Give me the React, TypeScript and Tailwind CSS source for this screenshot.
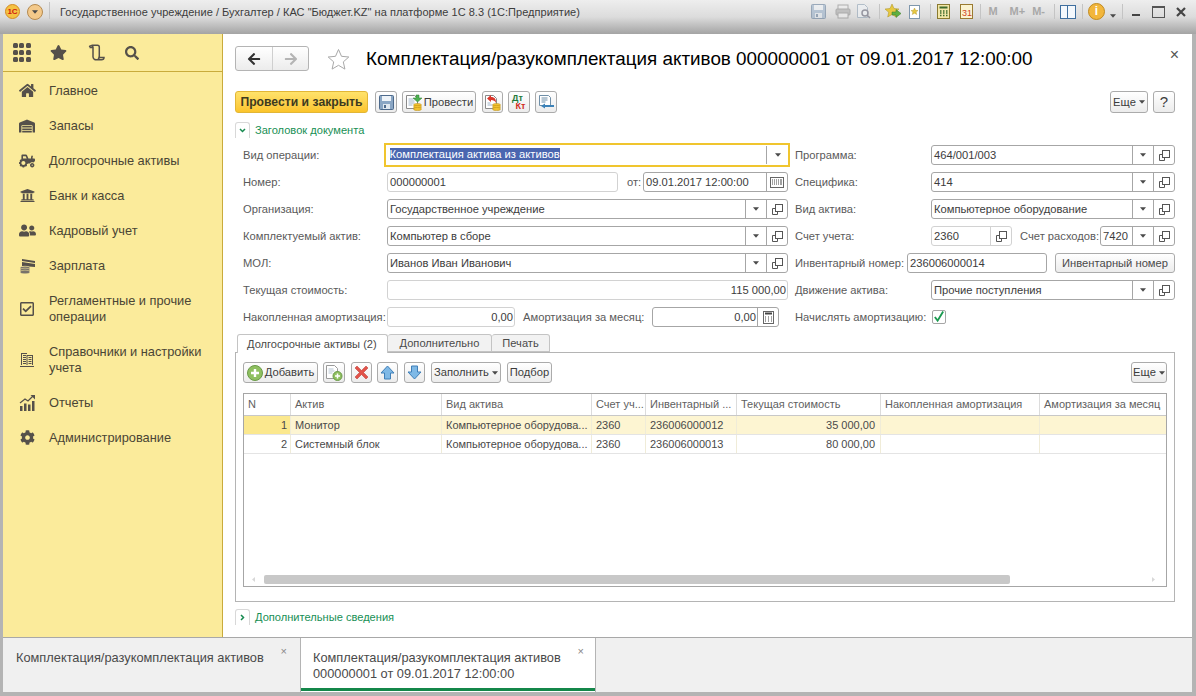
import React from "react";
import { FaHome, FaWarehouse, FaTractor, FaUniversity, FaUserFriends, FaRegCheckSquare, FaCog, FaStar, FaSearch, FaArrowLeft, FaArrowRight } from "react-icons/fa";

const font = "font-['Liberation_Sans',Arial,sans-serif]";

function Caret({ className = "" }: { className?: string }) {
  return (
    <svg width="6" height="4" viewBox="0 0 7 4" className={className}>
      <path d="M0 0h7L3.5 4z" fill="#4a4a4a" />
    </svg>
  );
}

function OpenIcon() {
  return (
    <svg width="11" height="11" viewBox="0 0 11 11" fill="none" stroke="#555">
      <rect x="3.5" y="0.5" width="7" height="7" />
      <path d="M3.5 4.5h-3v6h5v-3" />
    </svg>
  );
}

function CalendarGrid() {
  return (
    <svg width="14" height="11" viewBox="0 0 14 11" fill="none">
      <rect x="0.5" y="0.5" width="13" height="10" stroke="#666" />
      <path d="M2 3h1M4 3h1M6 3h1M8 3h1M10 3h2M2 5h1M4 5h1M6 5h1M8 5h1M10 5h2M2 7h1M4 7h1M6 7h1M8 7h1M10 7h2" stroke="#444" />
    </svg>
  );
}

function CalcIcon() {
  return (
    <svg width="11" height="13" viewBox="0 0 11 13" fill="none">
      <rect x="0.5" y="0.5" width="10" height="12" stroke="#666" />
      <path d="M2 2.5h7" stroke="#444" strokeWidth="2" />
      <path d="M2 6h1M5 6h1M8 6h1M2 8h1M5 8h1M8 8h1M2 10h1M5 10h1M8 10h1" stroke="#444" />
    </svg>
  );
}

type FieldProps = {
  value: string;
  className?: string;
  drop?: boolean;
  open?: boolean;
  readOnly?: boolean;
  right?: boolean;
  trailing?: React.ReactNode;
};

function Field({ value, className = "flex-1", drop, open, readOnly, right, trailing }: FieldProps) {
  const border = readOnly ? "border-[#d2d2d2]" : "border-[#a6a6a6]";
  return (
    <div className={`h-5 flex items-stretch border rounded-[3px] bg-white ${border} ${className}`}>
      <div className={`flex-1 min-w-0 pl-[2px] pr-[1px] leading-[18px] text-[#3c3c3c] whitespace-nowrap overflow-hidden ${right ? "text-right" : ""}`}>{value}</div>
      {drop && (
        <div className={`w-[21px] flex items-center justify-center border-l ${border}`}>
          <Caret />
        </div>
      )}
      {open && (
        <div className={`w-[21px] flex items-center justify-center border-l ${border}`}>
          <OpenIcon />
        </div>
      )}
      {trailing && <div className={`w-[21px] flex items-center justify-center border-l ${border}`}>{trailing}</div>}
    </div>
  );
}

function Btn({ children, className = "" }: { children: React.ReactNode; className?: string }) {
  return (
    <div className={`flex items-center justify-center border border-[#ababab] rounded-[3px] bg-linear-to-b from-white to-[#ececec] text-[#3c3c3c] whitespace-nowrap ${className}`}>
      {children}
    </div>
  );
}

function Floppy({ faded }: { faded?: boolean }) {
  return (
    <svg width="15" height="15" viewBox="0 0 15 15" opacity={faded ? 0.5 : 1}>
      <rect x="0.5" y="0.5" width="14" height="14" rx="1" fill="#8aa6c4" stroke="#4d6a8c" />
      <rect x="3" y="1" width="9" height="5" fill="#eef3f8" />
      <rect x="4" y="9" width="7" height="5" fill="#dfe7ef" />
      <rect x="5" y="10" width="2" height="3" fill="#4d6a8c" />
    </svg>
  );
}

function DocCoins() {
  return (
    <svg width="18" height="17" viewBox="0 0 18 17">
      <path d="M1.5 1.5h8l3 3v10h-11z" fill="#fff" stroke="#8a8a8a" />
      <path d="M3.5 5h5M3.5 7h6M3.5 9h6M3.5 11h4" stroke="#9fb4c8" />
      <path d="M11 1h3v3h3l-4.500 4L8 4h3z" fill="#4caf50" stroke="#2e7d32" strokeWidth="0.5" />
      <ellipse cx="12.5" cy="11" rx="4" ry="1.6" fill="#f2c230" stroke="#b88a10" strokeWidth="0.5" />
      <ellipse cx="12.5" cy="13" rx="4" ry="1.6" fill="#f2c230" stroke="#b88a10" strokeWidth="0.5" />
      <ellipse cx="12.5" cy="15" rx="4" ry="1.6" fill="#f2c230" stroke="#b88a10" strokeWidth="0.5" />
    </svg>
  );
}

function DocUndo() {
  return (
    <svg width="18" height="17" viewBox="0 0 18 17">
      <path d="M1.5 1.5h8l3 3v10h-11z" fill="#fff" stroke="#8a8a8a" />
      <path d="M3.5 11h5M3.5 9h3" stroke="#9fb4c8" />
      <path d="M7 1L3 4.500 7 8V6c2.500 0 4 .8 5 3 .2-4-1.500-6-5-6z" fill="#d9362b" />
      <ellipse cx="12.5" cy="11" rx="4" ry="1.6" fill="#f2c230" stroke="#b88a10" strokeWidth="0.5" />
      <ellipse cx="12.5" cy="13" rx="4" ry="1.6" fill="#f2c230" stroke="#b88a10" strokeWidth="0.5" />
      <ellipse cx="12.5" cy="15" rx="4" ry="1.6" fill="#f2c230" stroke="#b88a10" strokeWidth="0.5" />
    </svg>
  );
}

function DocArrow() {
  return (
    <svg width="18" height="17" viewBox="0 0 18 17">
      <path d="M2.500 1.500h9l2 2v8h-11v-10z" fill="#fff" stroke="#6f8fa8" />
      <path d="M4.500 4h6M4.500 6h6M4.500 8h4" stroke="#6f8fa8" />
      <path d="M8 9.500l-4 2.500 4 2.500V13h9v-2H8z" fill="#3c82b8" />
    </svg>
  );
}

function AddCircle() {
  return (
    <svg width="16" height="16" viewBox="0 0 16 16">
      <circle cx="8" cy="8" r="7.500" fill="#8fc060" stroke="#6a9a48" />
      <path d="M8 4v8M4 8h8" stroke="#fff" strokeWidth="2.400" />
    </svg>
  );
}

function DocAdd() {
  return (
    <svg width="18" height="17" viewBox="0 0 18 17">
      <path d="M1.500 1.500h8l3 3v10h-11z" fill="#fff" stroke="#9a9a9a" />
      <path d="M3.500 5h5M3.500 7h6M3.500 9h4" stroke="#b5c4d2" />
      <circle cx="12.500" cy="12" r="4.500" fill="#8fc060" stroke="#6a9a48" />
      <path d="M12.500 9.500v5M10 12h5" stroke="#fff" strokeWidth="1.500" />
    </svg>
  );
}

function RedCross() {
  return (
    <svg width="15" height="15" viewBox="0 0 15 15">
      <path d="M1 3l2-2 4.500 4.500L12 1l2 2-4.500 4.500L14 12l-2 2-4.500-4.500L3 14l-2-2 4.500-4.500z" fill="#e2534a" stroke="#b9342c" strokeWidth="0.500" />
    </svg>
  );
}

function ArrowUpBlue({ down }: { down?: boolean }) {
  return (
    <svg width="15" height="15" viewBox="0 0 15 15" className={down ? "rotate-180" : ""}>
      <path d="M7.500 1L14 8h-3.500v6h-6V8H1z" fill="#7fb9e6" stroke="#3f7fb8" />
    </svg>
  );
}

function ChartIcon() {
  return (
    <svg width="17" height="16" viewBox="0 0 17 16" fill="#55504a">
      <rect x="1" y="11" width="2.500" height="5" />
      <rect x="5" y="8.500" width="2.500" height="7.500" />
      <rect x="9" y="9.500" width="2.500" height="6.500" />
      <rect x="13" y="6" width="2.500" height="10" />
      <path d="M1 8l5-4 3 2 5-5" fill="none" stroke="#55504a" strokeWidth="1.200" />
      <path d="M11.500 0H16v4.500z" />
    </svg>
  );
}

function BooksIcon() {
  return (
    <svg width="14" height="15" viewBox="0 0 14 15" fill="none" stroke="#55504a">
      <path d="M1.500 1v12M7 3v10M12.500 3v10" />
      <path d="M1 1.500h6M3 3.500h3M3 5.500h3M3 7.500h3M3 9.500h3M3 11.500h3M8.500 5.500h3M8.500 7.500h3M8.500 9.500h3M8.500 11.500h3M7 3.500h6" />
      <path d="M0 14.500h14" />
    </svg>
  );
}

function SalaryIcon() {
  return (
    <svg width="17" height="16" viewBox="0 0 17 16">
      <path d="M3 1l13 2v6L3 8z" fill="#55504a" />
      <path d="M3 3.500l13 2" stroke="#fbeb9b" />
      <ellipse cx="6" cy="10" rx="5" ry="1.800" fill="#77726a" stroke="#fbeb9b" strokeWidth="0.500" />
      <ellipse cx="6" cy="12" rx="5" ry="1.800" fill="#77726a" stroke="#fbeb9b" strokeWidth="0.500" />
      <ellipse cx="6" cy="14" rx="5" ry="1.800" fill="#77726a" stroke="#fbeb9b" strokeWidth="0.500" />
    </svg>
  );
}

function ScrollIcon() {
  return (
    <svg width="17" height="17" viewBox="0 0 17 17" fill="none" stroke="#55504a" strokeWidth="1.500">
      <path d="M1.500 3c0-1.500 3-2 3.500 0v10c.2 1.800 2 2.800 3 2.800h5.500c1.500 0 2.500-1 2.500-2.300h-5c0 1.400-1 2.300-2.500 2.300" />
      <path d="M1.500 3.500H5M3.500 1.200h6c1.200 0 1.800 1 1.800 2v10" />
    </svg>
  );
}

const navItems: { label: React.ReactNode; icon: React.ReactNode; tall?: boolean }[] = [
  { label: "Главное", icon: <FaHome size={17} /> },
  { label: "Запасы", icon: <FaWarehouse size={16} /> },
  { label: "Долгосрочные активы", icon: <FaTractor size={16} /> },
  { label: "Банк и касса", icon: <FaUniversity size={15} /> },
  { label: "Кадровый учет", icon: <FaUserFriends size={17} /> },
  { label: "Зарплата", icon: <SalaryIcon /> },
  { label: <>Регламентные и прочие<br />операции</>, icon: <FaRegCheckSquare size={16} />, tall: true },
  { label: <>Справочники и настройки<br />учета</>, icon: <BooksIcon />, tall: true },
  { label: "Отчеты", icon: <ChartIcon /> },
  { label: "Администрирование", icon: <FaCog size={15} /> },
];

function Sidebar() {
  return (
    <aside className="w-[220px] shrink-0 bg-[#fbeb9b] border-r border-[#c9ab3c] text-[#4a4535]">
      <div className="h-[38px] flex items-center pl-[10px] border-b border-[#c9ab3c] text-[#55504a]">
        <div className="grid grid-cols-3 gap-[2px] w-[17px]">
          {Array.from({ length: 9 }).map((_, i) => (
            <span key={i} className="w-[5px] h-[5px] rounded-[1.500px] bg-[#55504a]" />
          ))}
        </div>
        <FaStar size={17} className="ml-[20px]" />
        <span className="ml-[21px]"><ScrollIcon /></span>
        <FaSearch size={14} className="ml-[20px]" />
      </div>
      <nav className="pt-[1px] text-[12.800px] leading-[16px]">
        {navItems.map((item, i) => (
          <div key={i} className={`flex items-center pl-[15px] ${item.tall ? "h-[51px]" : "h-[35px]"}`}>
            <div className="w-[18px] flex justify-center text-[#55504a]">{item.icon}</div>
            <div className="ml-[13px] whitespace-nowrap">{item.label}</div>
          </div>
        ))}
      </nav>
    </aside>
  );
}

function GroupHeader({ label, open }: { label: string; open?: boolean }) {
  return (
    <div className="h-4 flex items-center">
      <div className="w-[15px] h-4 flex items-center justify-center border-l border-t border-r border-[#d8d8d8] rounded-t-[3px]">
        <svg width="7" height="7" viewBox="0 0 7 7" fill="none" stroke="#178a50" strokeWidth="1.500" className={open ? "" : "-rotate-90"}>
          <path d="M1 2l2.500 2.500L6 2" />
        </svg>
      </div>
      <span className="ml-[5px] mt-[1px] text-[#178f55] text-[11.100px]">{label}</span>
    </div>
  );
}

function Row({ children }: { children: React.ReactNode }) {
  return <div className="h-5 flex items-center text-[#5a5a5a]">{children}</div>;
}

function Label({ w, children, className = "" }: { w: string; children: React.ReactNode; className?: string }) {
  return <span className={`${w} mt-[1px] whitespace-nowrap ${className}`}>{children}</span>;
}

function LeftForm() {
  return (
    <div className="w-[553px] pl-2 flex flex-col gap-[7px]">
      <Row>
        <Label w="w-[144px]">Вид операции:</Label>
        <div className="flex-1 -ml-[3px] -mr-[2px] h-[24px] border-[2.500px] border-[#f0c52e] flex items-stretch bg-white">
          <div className="flex-1 pl-[3.500px] leading-[19px] text-[#25305c]">
            <span className="bg-[#4a66b0] text-white">Комплектация актива из активов</span>
          </div>
          <div className="w-[22px] my-[1px] flex items-center justify-center border-l border-[#a6a6a6]"><Caret /></div>
        </div>
      </Row>
      <Row>
        <Label w="w-[144px]">Номер:</Label>
        <Field value="000000001" className="w-[231px] !border-[#d2d2d2]" />
        <Label w="w-[16px]" className="ml-[9px]">от:</Label>
        <Field value="09.01.2017 12:00:00" className="flex-1" trailing={<CalendarGrid />} />
      </Row>
      <Row>
        <Label w="w-[144px]">Организация:</Label>
        <Field value="Государственное учреждение" drop open />
      </Row>
      <Row>
        <Label w="w-[144px]">Комплектуемый актив:</Label>
        <Field value="Компьютер в сборе" drop open />
      </Row>
      <Row>
        <Label w="w-[144px]">МОЛ:</Label>
        <Field value="Иванов Иван Иванович" drop open />
      </Row>
      <Row>
        <Label w="w-[144px]">Текущая стоимость:</Label>
        <Field value="115 000,00" readOnly right />
      </Row>
      <Row>
        <Label w="w-[144px]">Накопленная амортизация:</Label>
        <Field value="0,00" readOnly right className="w-[128px]" />
        <Label w="w-[129px]" className="ml-2">Амортизация за месяц:</Label>
        <Field value="0,00" right className="w-[127px]" trailing={<CalcIcon />} />
      </Row>
    </div>
  );
}

function RightForm() {
  return (
    <div className="w-[380px] ml-[7px] flex flex-col gap-[7px]">
      <Row>
        <Label w="w-[136px]">Программа:</Label>
        <Field value="464/001/003" drop open />
      </Row>
      <Row>
        <Label w="w-[136px]">Специфика:</Label>
        <Field value="414" drop open />
      </Row>
      <Row>
        <Label w="w-[136px]">Вид актива:</Label>
        <Field value="Компьютерное оборудование" drop open />
      </Row>
      <Row>
        <Label w="w-[136px]">Счет учета:</Label>
        <Field value="2360" open readOnly className="w-[81px]" />
        <Label w="w-[80px]" className="ml-2">Счет расходов:</Label>
        <Field value="7420" drop open />
      </Row>
      <Row>
        <Label w="w-[112px]">Инвентарный номер:</Label>
        <Field value="236006000014" className="w-[140px]" />
        <Btn className="ml-2 flex-1 h-5 text-[#4a4a4a]">Инвентарный номер</Btn>
      </Row>
      <Row>
        <Label w="w-[136px]">Движение актива:</Label>
        <Field value="Прочие поступления" drop open />
      </Row>
      <Row>
        <Label w="w-[137px]">Начислять амортизацию:</Label>
        <div className="w-[14px] h-[14px] border border-[#a6a6a6] rounded-[2px] flex items-center justify-center bg-white">
          <svg width="13" height="13" viewBox="0 0 13 13" fill="none" stroke="#1a9a50" strokeWidth="2" className="-mt-[2px]">
            <path d="M2 7l3 4 6-10" />
          </svg>
        </div>
      </Row>
    </div>
  );
}

const columns = [
  { title: "N", w: "w-[47px]" },
  { title: "Актив", w: "w-[151px]" },
  { title: "Вид актива", w: "w-[150px]" },
  { title: "Счет уч...", w: "w-[54px]" },
  { title: "Инвентарный ...", w: "w-[91px]" },
  { title: "Текущая стоимость", w: "w-[144px]" },
  { title: "Накопленная амортизация", w: "w-[159px]" },
  { title: "Амортизация за месяц", w: "flex-1 min-w-0" },
];

const rows = [
  ["1", "Монитор", "Компьютерное оборудова...", "2360", "236006000012", "35 000,00", "", ""],
  ["2", "Системный блок", "Компьютерное оборудова...", "2360", "236006000013", "80 000,00", "", ""],
];

function AssetsTable() {
  return (
    <div className="h-[194px] mt-[10px] mx-[7px] border border-[#a6a6a6] flex flex-col text-[#4a4a4a] text-[11px]">
      <div className="h-[22px] flex border-b border-[#c8c8c8] text-[#5f5f5f]">
        {columns.map((c) => (
          <div key={c.title} className={`${c.w} pl-[4px] pr-[2px] leading-[21px] border-r border-[#dcdcdc] last:border-r-0 whitespace-nowrap overflow-hidden`}>
            {c.title}
          </div>
        ))}
      </div>
      {rows.map((r, ri) => (
        <div key={ri} className={`h-[19px] flex border-b border-[#e4e4e4] ${ri === 0 ? "bg-[#fdf5d2]" : ""}`}>
          {r.map((v, ci) => (
            <div
              key={ci}
              className={`${columns[ci].w} pl-[4px] leading-[18px] border-r border-[#f0ecd8] last:border-r-0 whitespace-nowrap overflow-hidden ${ci === 0 ? "text-right pr-[3px]" : ci === 5 ? "text-right pr-[5px]" : "pr-0"} ${ri === 0 && ci === 0 ? "bg-[#fbe88e]" : ""}`}
            >
              {v}
            </div>
          ))}
        </div>
      ))}
      <div className="flex-1" />
      <div className="h-[9px] mb-[2px] flex items-center pl-[8px] pr-[11px]">
        <svg width="3" height="5" viewBox="0 0 3 5"><path d="M3 0v5L0 2.500z" fill="#d8d8d8" /></svg>
        <div className="ml-[9px] w-[746px] h-[9px] rounded-[2px] bg-[#c8c8c8]" />
        <svg width="3" height="5" viewBox="0 0 3 5" className="ml-auto"><path d="M0 0v5l3-2.500z" fill="#d8d8d8" /></svg>
      </div>
    </div>
  );
}

function AssetsPanel() {
  return (
    <>
      <div className="mt-[7px] h-[18px] flex items-stretch text-[#4a4a4a] text-[11.100px]">
        <div className="ml-[2px] w-[151px] border border-b-0 border-[#c4c4c4] rounded-t-[3px] bg-white relative z-10 h-[19px] pl-[9px] leading-[18px]">Долгосрочные активы (2)</div>
        <div className="w-[104px] border border-l-0 border-[#c4c4c4] rounded-t-[3px] bg-[#f2f2f2] text-center leading-[17px]">Дополнительно</div>
        <div className="w-[58px] border border-l-0 border-[#c4c4c4] rounded-t-[3px] bg-[#f2f2f2] text-center leading-[17px]">Печать</div>
      </div>
      <div className="h-[250px] border border-[#b4b4b4] pt-[9px]">
        <div className="flex items-stretch h-[21px] px-[7px]">
          <Btn className="w-[75px] gap-[2px]"><AddCircle />Добавить</Btn>
          <Btn className="ml-[5px] w-[22px]"><DocAdd /></Btn>
          <Btn className="ml-[6px] w-[21px]"><RedCross /></Btn>
          <Btn className="ml-[5px] w-[21px]"><ArrowUpBlue /></Btn>
          <Btn className="ml-[6px] w-[21px]"><ArrowUpBlue down /></Btn>
          <Btn className="ml-[6px] w-[70px] gap-[3px]">Заполнить<Caret /></Btn>
          <Btn className="ml-[6px] w-[45px]">Подбор</Btn>
          <Btn className="ml-auto w-[36px] gap-[3px]">Еще<Caret /></Btn>
        </div>
        <AssetsTable />
      </div>
    </>
  );
}

function TitleBar() {
  return (
    <header className="h-[34px] shrink-0 flex items-start bg-linear-to-b from-[#eeeeee] via-[#dcdcdc] to-[#a4a4a4] text-[#3c3c3c]">
      <div className="ml-[5px] mt-[4px] w-[15px] h-[15px] rounded-full bg-[#f5c242] border border-[#d58a20] flex items-center justify-center text-[8px] font-bold text-[#d02010] leading-none">1С</div>
      <div className="ml-[7px] mt-[4px] w-[16px] h-[16px] rounded-full bg-[#f3c98a] border border-[#b58a50] flex items-center justify-center"><Caret /></div>
      <div className="ml-[6px] mt-[2px] w-px h-[17px] bg-[#c4c4c4]" />
      <div className="ml-[10px] mt-[4px] text-[11px] leading-[16px] tracking-[0.030px] whitespace-nowrap">Государственное учреждение / Бухгалтер / КАС "Бюджет.KZ" на платформе 1С 8.3  (1С:Предприятие)</div>
      <div className="ml-auto mt-[4px] mr-[10px] flex items-center h-[15px] text-[#a8a8a8] font-bold text-[11px]">
        <Floppy faded />
        <svg width="16" height="15" viewBox="0 0 16 15" className="ml-[9px]" opacity="0.6"><rect x="3" y="1" width="10" height="5" fill="#eee" stroke="#888" /><rect x="1" y="5" width="14" height="6" rx="1" fill="#aaa" stroke="#888" /><rect x="3" y="9" width="10" height="5" fill="#eee" stroke="#888" /></svg>
        <svg width="15" height="15" viewBox="0 0 15 15" className="ml-[5px]" opacity="0.6"><path d="M1.500.5h7l3 3v10h-10z" fill="#eef2f6" stroke="#8fa2b5" /><circle cx="9" cy="9" r="3" fill="none" stroke="#667" strokeWidth="1.500" /><path d="M11 11l3 3" stroke="#667" strokeWidth="1.500" /></svg>
        <div className="ml-[8px] w-px h-[15px] bg-[#c4c4c4]" />
        <svg width="16" height="15" viewBox="0 0 16 15" className="ml-[5px]"><path d="M7 0l2 4.500 5 .5-3.700 3.300 1 4.700L7 10.500 2.700 13l1-4.700L0 5l5-.5z" fill="#e8c840" stroke="#a89020" strokeWidth="0.500" /><path d="M7 8h4V5.500l5 4-5 4V11H7z" fill="#5fb040" stroke="#3a7a28" strokeWidth="0.500" /></svg>
        <svg width="11" height="14" viewBox="0 0 11 14" className="ml-[8px]"><rect x="0.500" y="0.500" width="10" height="13" fill="#fff" stroke="#7f97ad" /><path d="M5.500 3l1 2.300 2.500.2-1.900 1.600.6 2.400-2.200-1.300-2.200 1.300.6-2.400L2 5.500l2.500-.2z" fill="#e8c840" stroke="#a89020" strokeWidth="0.400" /></svg>
        <div className="ml-[10px] w-px h-[15px] bg-[#c4c4c4]" />
        <svg width="13" height="15" viewBox="0 0 13 15" className="ml-[6px]"><rect x="0.500" y="0.500" width="12" height="14" fill="#f3e7a8" stroke="#8a7a30" /><rect x="2.500" y="2.500" width="8" height="2" fill="#3d6b2c" /><path d="M3 7h1.500M6 7h1.500M9 7h1.500M3 9h1.500M6 9h1.500M9 9h1.500M3 11.500h1.500M6 11.500h1.500M9 11.500h1.500" stroke="#3d6b2c" strokeWidth="1.300" /></svg>
        <div className="ml-[10px] w-[13px] h-[15px] border border-[#9a7a30] bg-[#fbf3d0] text-[#d04020] text-[9px] leading-[16px] text-center font-normal">31</div>
        <div className="ml-[7px] w-px h-[15px] bg-[#c4c4c4]" />
        <span className="ml-[7px]">M</span>
        <span className="ml-[12px]">M+</span>
        <span className="ml-[7px]">M-</span>
        <div className="ml-[9px] w-px h-[15px] bg-[#c4c4c4]" />
        <div className="ml-[5px] w-[16px] h-[14px] border border-[#3f6f9f] bg-[#f4f8fc] flex"><div className="w-[7px] border-r border-[#3f6f9f]" /></div>
        <div className="ml-[6px] w-px h-[15px] bg-[#c4c4c4]" />
        <div className="ml-[5px] w-[17px] h-[17px] rounded-full bg-[#f2b63c] border border-[#c08a20] text-white text-[12px] leading-[15px] text-center">i</div>
        <Caret className="ml-[5px] mt-[8px]" />
        <div className="ml-[6px] w-px h-[15px] bg-[#c4c4c4]" />
        <div className="ml-[9px] mt-[6px] w-[8px] h-[2px] bg-[#444]" />
        <div className="ml-[12px] w-[13px] h-[12px] border border-[#555] border-t-2" />
        <svg width="10" height="10" viewBox="0 0 10 10" className="ml-[11px]"><path d="M1 1l8 8M9 1l-8 8" stroke="#444" strokeWidth="2.200" /></svg>
      </div>
    </header>
  );
}

function DocHeader() {
  return (
    <div className="mt-3 h-[25px] flex items-center">
      <div className="w-[74px] h-[25px] border border-[#b4b4b4] rounded-[3px] bg-linear-to-b from-white to-[#ececec] flex">
        <div className="w-[37px] flex items-center justify-center border-r border-[#cfcfcf]"><FaArrowLeft size={14} className="text-[#333]" /></div>
        <div className="flex-1 flex items-center justify-center"><FaArrowRight size={14} className="text-[#b4b4b4]" /></div>
      </div>
      <svg width="23" height="22" viewBox="0 0 23 22" fill="none" stroke="#a8a8a8" className="ml-[18px]">
        <path d="M11.500 1.500l3 6.800 7.300.7-5.500 4.900 1.600 7.200-6.400-3.800-6.400 3.800 1.600-7.200L1.200 9l7.300-.7z" />
      </svg>
      <h1 className="ml-[16px] mt-[2px] text-[18.850px] text-black whitespace-nowrap">Комплектация/разукомплектация активов 000000001 от 09.01.2017 12:00:00</h1>
      <span className="ml-auto -mr-[4px] -mt-[7px] text-[16px] leading-none text-[#555]">×</span>
    </div>
  );
}

function DocToolbar() {
  return (
    <div className="mt-5 h-[22px] flex items-stretch">
      <div className="w-[133px] flex items-center justify-center border border-[#e2b636] rounded-[3px] bg-linear-to-b from-[#ffe26a] to-[#fbc42a] font-bold text-[#3d3a20] text-[12.200px]">Провести и закрыть</div>
      <Btn className="ml-[7px] w-[22px]"><Floppy /></Btn>
      <Btn className="ml-[5px] w-[74px] gap-[1px]"><DocCoins />Провести</Btn>
      <Btn className="ml-[6px] w-[21px]"><DocUndo /></Btn>
      <Btn className="ml-[5px] w-[22px] flex-col text-[9px] font-bold leading-[8px]">
        <span className="text-[#1f7a3a] -ml-[3px]">Дт</span>
        <span className="text-[#d02a20] ml-[3px]">Кт</span>
      </Btn>
      <Btn className="ml-[5px] w-[22px]"><DocArrow /></Btn>
      <Btn className="ml-auto w-[38px] gap-[3px]">Еще<Caret /></Btn>
      <Btn className="ml-[5px] w-[22px] text-[15px]">?</Btn>
    </div>
  );
}

function Tabs() {
  return (
    <footer className="h-[55px] ml-[3px] mr-[4px] flex bg-[#f0f0f0] border-t border-[#a8a8a8] text-[12.800px] text-[#4a4a4a]">
      <div className="w-[297px] pl-[13px] pt-[12px] flex items-start">
        <span className="whitespace-nowrap leading-[16px]">Комплектация/разукомплектация активов</span>
        <span className="ml-auto mr-[13px] -mt-[7px] text-[11px] text-[#888]">×</span>
      </div>
      <div className="w-[296px] bg-white border-x border-[#b4b4b4] pl-[12px] pt-[12px] flex items-start relative">
        <span className="whitespace-nowrap leading-[16px]">Комплектация/разукомплектация активов<br />000000001 от 09.01.2017 12:00:00</span>
        <span className="ml-auto mr-[11px] -mt-[7px] text-[11px] text-[#888]">×</span>
        <div className="absolute left-0 right-0 bottom-[1px] h-[3px] bg-[#14874a]" />
      </div>
    </footer>
  );
}

export default function App() {
  return (
    <div className={`w-[1196px] h-[696px] overflow-hidden flex flex-col bg-[#b4b4b4] text-[11.200px] ${font}`}>
      <TitleBar />
      <div className="h-[603px] flex pl-[3px] pr-[4px]">
        <Sidebar />
        <main className="flex-1 min-w-0 bg-white pl-3 pr-[17px]">
          <DocHeader />
          <DocToolbar />
          <div className="mt-[9px]"><GroupHeader label="Заголовок документа" open /></div>
          <div className="mt-[7px] flex">
            <LeftForm />
            <RightForm />
          </div>
          <AssetsPanel />
          <div className="mt-[7px]"><GroupHeader label="Дополнительные сведения" /></div>
        </main>
      </div>
      <Tabs />
    </div>
  );
}
